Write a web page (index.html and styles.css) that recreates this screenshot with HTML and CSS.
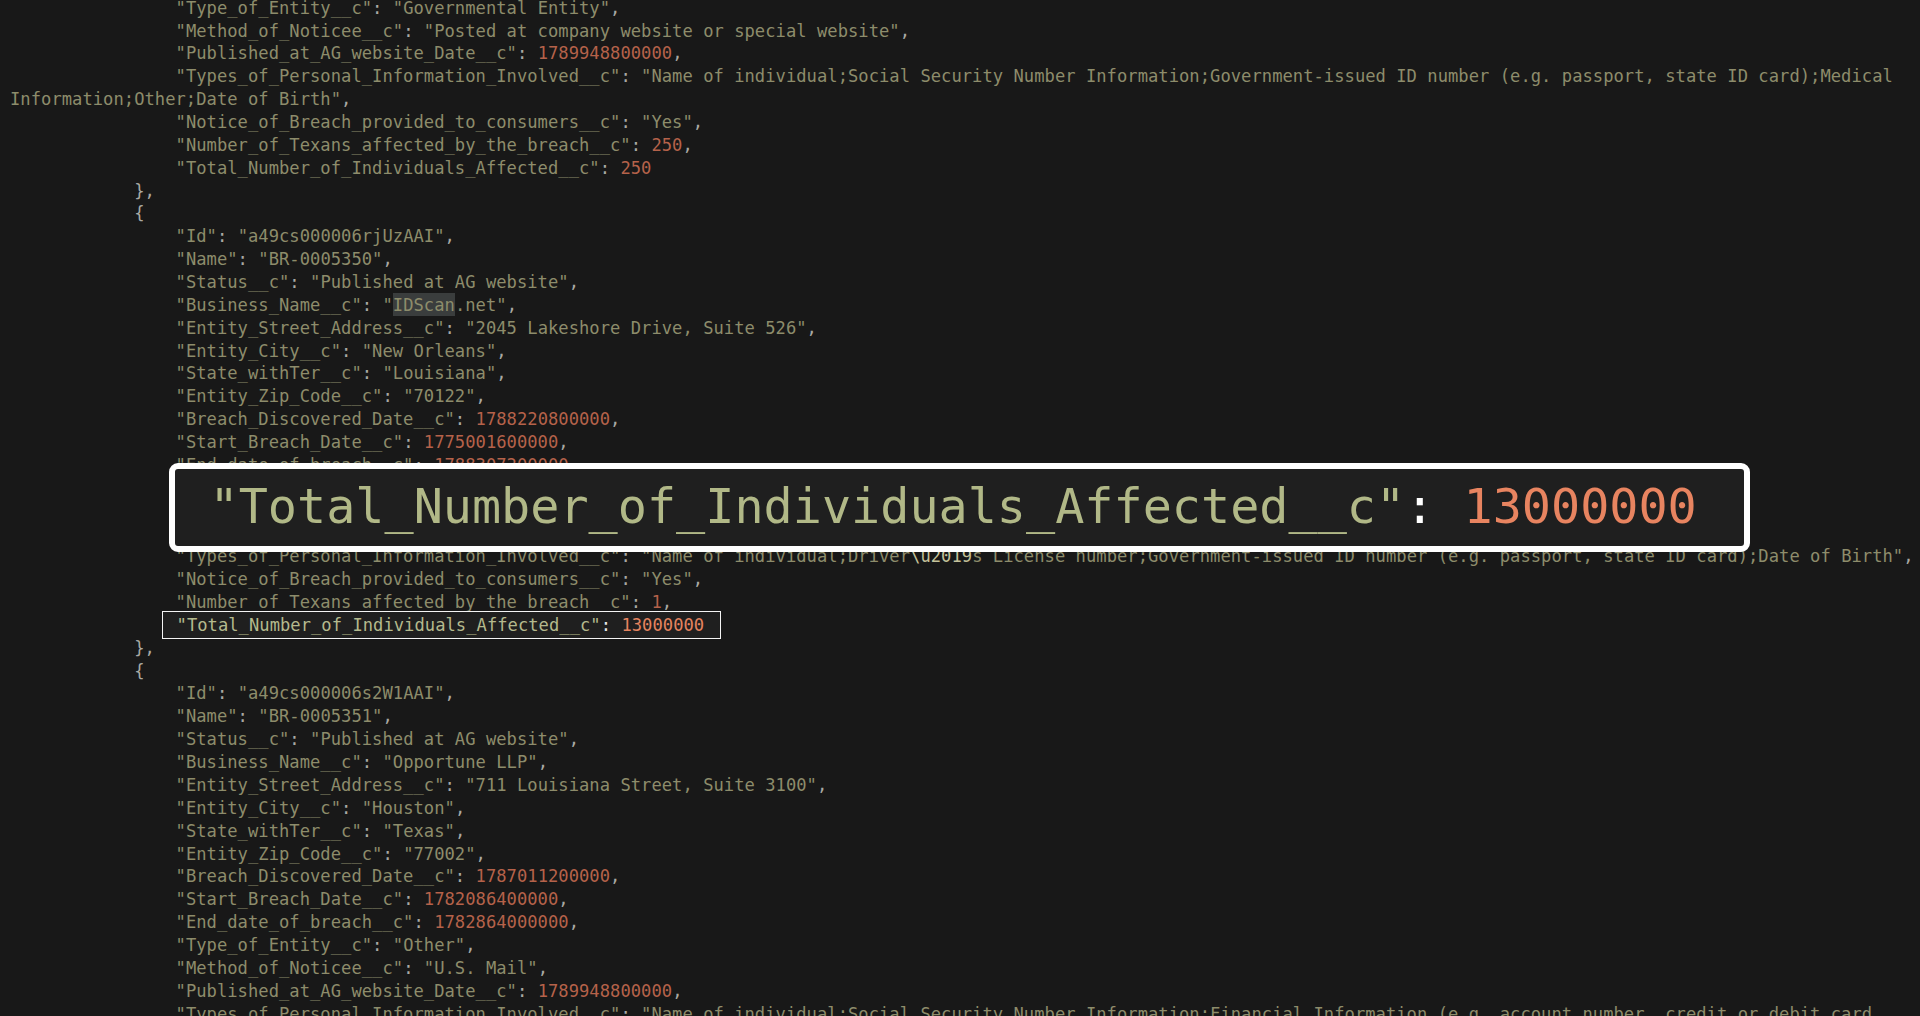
FILE: index.html
```html
<!DOCTYPE html>
<html>
<head>
<meta charset="utf-8">
<link rel="stylesheet" href="styles.css">
</head>
<body>
<div class="viewer">
<pre class="code"><span class="ln">                <span class="k">"Type_of_Entity__c"</span>: <span class="k">"Governmental Entity"</span>,</span>
<span class="ln">                <span class="k">"Method_of_Noticee__c"</span>: <span class="k">"Posted at company website or special website"</span>,</span>
<span class="ln">                <span class="k">"Published_at_AG_website_Date__c"</span>: <span class="n">1789948800000</span>,</span>
<span class="ln">                <span class="k">"Types_of_Personal_Information_Involved__c"</span>: <span class="k">"Name of individual;Social Security Number Information;Government-issued ID number (e.g. passport, state ID card);Medical</span></span>
<span class="ln"><span class="k">Information;Other;Date of Birth"</span>,</span>
<span class="ln">                <span class="k">"Notice_of_Breach_provided_to_consumers__c"</span>: <span class="k">"Yes"</span>,</span>
<span class="ln">                <span class="k">"Number_of_Texans_affected_by_the_breach__c"</span>: <span class="n">250</span>,</span>
<span class="ln">                <span class="k">"Total_Number_of_Individuals_Affected__c"</span>: <span class="n">250</span></span>
<span class="ln">            },</span>
<span class="ln">            {</span>
<span class="ln">                <span class="k">"Id"</span>: <span class="k">"a49cs000006rjUzAAI"</span>,</span>
<span class="ln">                <span class="k">"Name"</span>: <span class="k">"BR-0005350"</span>,</span>
<span class="ln">                <span class="k">"Status__c"</span>: <span class="k">"Published at AG website"</span>,</span>
<span class="ln">                <span class="k">"Business_Name__c"</span>: <span class="k">"<span class="find">IDScan</span>.net"</span>,</span>
<span class="ln">                <span class="k">"Entity_Street_Address__c"</span>: <span class="k">"2045 Lakeshore Drive, Suite 526"</span>,</span>
<span class="ln">                <span class="k">"Entity_City__c"</span>: <span class="k">"New Orleans"</span>,</span>
<span class="ln">                <span class="k">"State_withTer__c"</span>: <span class="k">"Louisiana"</span>,</span>
<span class="ln">                <span class="k">"Entity_Zip_Code__c"</span>: <span class="k">"70122"</span>,</span>
<span class="ln">                <span class="k">"Breach_Discovered_Date__c"</span>: <span class="n">1788220800000</span>,</span>
<span class="ln">                <span class="k">"Start_Breach_Date__c"</span>: <span class="n">1775001600000</span>,</span>
<span class="ln">                <span class="k">"End_date_of_breach__c"</span>: <span class="n">1788307200000</span>,</span>
<span class="ln">                <span class="k">"Type_of_Entity__c"</span>: <span class="k">"Other"</span>,</span>
<span class="ln">                <span class="k">"Method_of_Noticee__c"</span>: <span class="k">"Email"</span>,</span>
<span class="ln">                <span class="k">"Published_at_AG_website_Date__c"</span>: <span class="n">1789948800000</span>,</span>
<span class="ln">                <span class="k">"Types_of_Personal_Information_Involved__c"</span>: <span class="k">"Name of individual;Driver<span class="esc">\u2019</span>s License number;Government-issued ID number (e.g. passport, state ID card);Date of Birth"</span>,</span>
<span class="ln">                <span class="k">"Notice_of_Breach_provided_to_consumers__c"</span>: <span class="k">"Yes"</span>,</span>
<span class="ln">                <span class="k">"Number_of_Texans_affected_by_the_breach__c"</span>: <span class="n">1</span>,</span>
<span class="ln">                <span class="boxed"><span class="bk">"Total_Number_of_Individuals_Affected__c"</span><span class="bp">:</span> <span class="bn">13000000</span></span></span>
<span class="ln">            },</span>
<span class="ln">            {</span>
<span class="ln">                <span class="k">"Id"</span>: <span class="k">"a49cs000006s2W1AAI"</span>,</span>
<span class="ln">                <span class="k">"Name"</span>: <span class="k">"BR-0005351"</span>,</span>
<span class="ln">                <span class="k">"Status__c"</span>: <span class="k">"Published at AG website"</span>,</span>
<span class="ln">                <span class="k">"Business_Name__c"</span>: <span class="k">"Opportune LLP"</span>,</span>
<span class="ln">                <span class="k">"Entity_Street_Address__c"</span>: <span class="k">"711 Louisiana Street, Suite 3100"</span>,</span>
<span class="ln">                <span class="k">"Entity_City__c"</span>: <span class="k">"Houston"</span>,</span>
<span class="ln">                <span class="k">"State_withTer__c"</span>: <span class="k">"Texas"</span>,</span>
<span class="ln">                <span class="k">"Entity_Zip_Code__c"</span>: <span class="k">"77002"</span>,</span>
<span class="ln">                <span class="k">"Breach_Discovered_Date__c"</span>: <span class="n">1787011200000</span>,</span>
<span class="ln">                <span class="k">"Start_Breach_Date__c"</span>: <span class="n">1782086400000</span>,</span>
<span class="ln">                <span class="k">"End_date_of_breach__c"</span>: <span class="n">1782864000000</span>,</span>
<span class="ln">                <span class="k">"Type_of_Entity__c"</span>: <span class="k">"Other"</span>,</span>
<span class="ln">                <span class="k">"Method_of_Noticee__c"</span>: <span class="k">"U.S. Mail"</span>,</span>
<span class="ln">                <span class="k">"Published_at_AG_website_Date__c"</span>: <span class="n">1789948800000</span>,</span>
<span class="ln">                <span class="k">"Types_of_Personal_Information_Involved__c"</span>: <span class="k">"Name of individual;Social Security Number Information;Financial Information (e.g. account number, credit or debit card</span></span></pre>
<div class="zoombox"><span class="zline"><span class="zk">"Total_Number_of_Individuals_Affected__c"</span><span class="zp">:</span> <span class="zn">13000000</span></span></div>
</div>
</body>
</html>
```
FILE: styles.css
```css
html, body {
  margin: 0;
  padding: 0;
  background: #181818;
  overflow: hidden;
  height: 1016px;
}
.viewer {
  position: relative;
  width: 1920px;
  height: 1016px;
  overflow: hidden;
  background: #181818;
}
.code {
  margin: -3.3px 0 0 0;
  padding: 0 0 0 10px;
  font-family: "DejaVu Sans Mono", monospace;
  font-size: 17.14px;
  letter-spacing: 0.035px;
  line-height: 22.86px;
  color: #a9a9a4;
  white-space: pre;
}
.k { color: #8d8c6b; }
.n { color: #b5624a; }
.esc { color: #c4c29a; }
.find {
  background: #3a3d3d;
  padding: 1.5px 0;
}
.boxed {
  background: #1f1f1f;
  border: 1px solid #f4f4f4;
  padding: 3.3px 16px 3.3px 14px;
  margin: 0 -16px 0 -14px;
}
.bk { color: #b4b98d; }
.bp { color: #e6e6e6; }
.bn { color: #e5845f; }
.zoombox {
  position: absolute;
  left: 169px;
  top: 463px;
  width: 1581px;
  height: 89px;
  box-sizing: border-box;
  border: 6.5px solid #ffffff;
  border-radius: 9px;
  background: #1f1f1f;
  display: flex;
  align-items: center;
  padding: 0 0 3px 34.5px;
  font-family: "DejaVu Sans Mono", monospace;
  font-size: 48.44px;
  line-height: 1;
}
.zline { white-space: pre; }
.zk { color: #b1b887; }
.zp { color: #ffffff; }
.zn { color: #e88460; }
```
